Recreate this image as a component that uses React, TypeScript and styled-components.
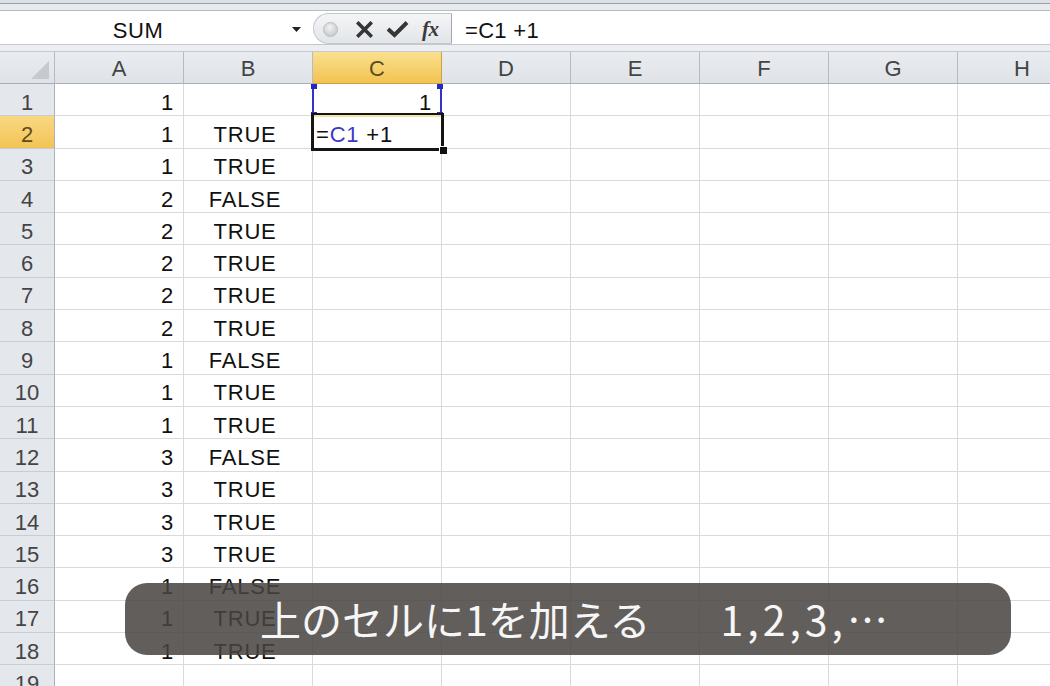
import React from "react";
import styled, { createGlobalStyle, css } from "styled-components";

const Global = createGlobalStyle`
  html, body { margin: 0; padding: 0; background: #ffffff; overflow: hidden; }
  * { box-sizing: border-box; }
`;

const Page = styled.div`
  position: relative;
  width: 1050px;
  height: 686px;
  overflow: hidden;
  display: flex;
  flex-direction: column;
  font-family: "Liberation Sans", Arial, sans-serif;
  background: #fff;
`;

const TopStrip = styled.div`
  height: 12px;
  flex: none;
  background: linear-gradient(
    to bottom,
    #dde1e6 0,
    #dde1e6 3px,
    #9aa0a7 3px,
    #9aa0a7 4px,
    #e8ebee 4px,
    #e8ebee 10px,
    #b7bcc2 10px,
    #b7bcc2 11px,
    #ffffff 11px
  );
`;

const FormulaBar = styled.div`
  height: 33px;
  flex: none;
  display: flex;
  align-items: stretch;
  background: #ffffff;
  border-bottom: 1px solid #c3c8ce;
`;

const NameBox = styled.div`
  width: 276px;
  display: flex;
  align-items: center;
  justify-content: center;
  padding-top: 5px;
  font-size: 22px;
  letter-spacing: 0.6px;
  color: #111;
`;

const NameArrow = styled.div`
  width: 37px;
  display: flex;
  align-items: center;
  justify-content: center;
  padding-left: 4px;
  padding-top: 3px;
`;

const ButtonGroup = styled.div`
  width: 139px;
  display: flex;
  align-items: center;
  padding-left: 9px;
  padding-top: 1px;
  margin: 1px 0 0;
  border: 1px solid #c4c8cd;
  border-right: 1px solid #a3a8ae;
  border-radius: 16px 0 0 16px;
  background: linear-gradient(to bottom, #f4f5f7, #e2e5e8);
`;

const ExpandDot = styled.div`
  width: 15px;
  height: 15px;
  border-radius: 50%;
  background: radial-gradient(circle at 45% 35%, #f2f3f4 0, #d3d6d9 55%, #babec2 100%);
  border: 1px solid #b9bdc2;
`;

const IconSlot = styled.div<{ $ml: number }>`
  margin-left: ${(p) => p.$ml}px;
  display: flex;
  align-items: center;
`;

const Fx = styled.span`
  margin-left: 13px;
  font-family: "Liberation Serif", "Times New Roman", serif;
  font-style: italic;
  font-weight: bold;
  font-size: 21px;
  color: #3a3a3a;
  letter-spacing: -0.5px;
`;

const FormulaInput = styled.div`
  flex: 1;
  display: flex;
  align-items: center;
  padding-left: 13px;
  padding-top: 5px;
  font-size: 22px;
  color: #111;
  letter-spacing: 0.3px;
`;

const Band = styled.div`
  height: 7px;
  flex: none;
  background: #eceef1;
  border-bottom: 1px solid #c5cad0;
`;

const Sheet = styled.div`
  display: grid;
  grid-template-columns: 55px repeat(8, 129px);
  grid-template-rows: 32px repeat(19, 32.3px);
  width: 1087px;
  flex: none;
`;

const headerBase = css`
  display: flex;
  align-items: center;
  justify-content: center;
  padding-top: 3px;
  font-size: 22px;
  color: #444;
  background: linear-gradient(to bottom, #e9ecf0, #dfe3e8);
  border-right: 1px solid #b6bbc1;
  border-bottom: 1px solid #a9aeb4;
`;

const Corner = styled.div`
  ${headerBase};
  position: relative;
  justify-content: flex-end;
  align-items: flex-end;
  padding: 0 5px 4px 0;
`;

const ColHeader = styled.div<{ $sel?: boolean }>`
  ${headerBase};
  ${(p) =>
    p.$sel &&
    css`
      background: linear-gradient(to bottom, #fae08f, #f2c352);
      color: #5e4c1c;
      border-bottom-color: #c9a246;
      border-right-color: #c9a246;
    `}
`;

const RowHeader = styled.div<{ $sel?: boolean }>`
  display: flex;
  align-items: center;
  justify-content: center;
  padding-top: 6px;
  font-size: 22px;
  color: #444;
  background: #e4e7ec;
  border-right: 1px solid #adb2b8;
  border-bottom: 1px solid #c9cdd2;
  ${(p) =>
    p.$sel &&
    css`
      background: linear-gradient(to bottom, #f9d882, #f2c455);
      color: #5e4c1c;
    `}
`;

const Cell = styled.div<{ $align: "left" | "right" | "center" }>`
  position: relative;
  display: flex;
  align-items: center;
  justify-content: ${(p) =>
    p.$align === "right" ? "flex-end" : p.$align === "center" ? "center" : "flex-start"};
  padding: 6px 9px 0 3px;
  font-size: 22px;
  letter-spacing: 0.8px;
  color: #111;
  border-right: 1px solid #d9dadc;
  border-bottom: 1px solid #d9dadc;
  white-space: nowrap;
`;

const RefHighlight = styled.div`
  position: absolute;
  top: 0;
  bottom: -1px;
  left: -1px;
  right: -1px;
  border-left: 2px solid #3434c4;
  border-right: 2px solid #3434c4;
  pointer-events: none;
`;

const Handle = styled.span<{ $v: "top" | "bottom"; $h: "left" | "right" }>`
  position: absolute;
  width: 6px;
  height: 5px;
  background: #2626c8;
  ${(p) => (p.$v === "top" ? "top: 0;" : "bottom: -1px;")}
  ${(p) => (p.$h === "left" ? "left: -3px;" : "right: -3px;")}
`;

const EditBorder = styled.div`
  position: absolute;
  top: -3px;
  left: -2px;
  right: -3px;
  bottom: -3px;
  border: 3px solid #151515;
  border-top-width: 2px;
  box-shadow: inset 0 2px 0 #f3e4a3;
  pointer-events: none;
`;

const FillHandle = styled.span`
  position: absolute;
  right: -6px;
  bottom: -6px;
  width: 8px;
  height: 8px;
  background: #111;
  border-left: 1px solid #fff;
  border-top: 1px solid #fff;
`;

const RefText = styled.span`
  color: #3a3ac4;
`;

const Caption = styled.div`
  position: absolute;
  left: 125px;
  top: 583px;
  width: 886px;
  height: 72px;
  border-radius: 22px;
  background: rgba(72, 68, 64, 0.86);
  display: flex;
  align-items: center;
  padding-left: 135px;
  padding-bottom: 2px;
  color: #f6f6f6;
  font-family: "Noto Sans CJK JP", "Noto Sans", sans-serif;
  font-size: 41px;
  font-weight: 400;
  white-space: nowrap;
`;

const CaptionSeq = styled.span`
  margin-left: 70px;
  letter-spacing: 4px;
`;

const cols = ["A", "B", "C", "D", "E", "F", "G", "H"];

const data: [string, string][] = [
  ["1", ""],
  ["1", "TRUE"],
  ["1", "TRUE"],
  ["2", "FALSE"],
  ["2", "TRUE"],
  ["2", "TRUE"],
  ["2", "TRUE"],
  ["2", "TRUE"],
  ["1", "FALSE"],
  ["1", "TRUE"],
  ["1", "TRUE"],
  ["3", "FALSE"],
  ["3", "TRUE"],
  ["3", "TRUE"],
  ["3", "TRUE"],
  ["1", "FALSE"],
  ["1", "TRUE"],
  ["1", "TRUE"],
  ["", ""],
];

const CornerTriangle = () => (
  <svg width="18" height="18" viewBox="0 0 18 18">
    <polygon points="18,0 18,18 0,18" fill="#c6cacf" />
  </svg>
);

const CrossIcon = () => (
  <svg width="17" height="17" viewBox="0 0 17 17">
    <path d="M2.5 2.5 L14.5 14.5 M14.5 2.5 L2.5 14.5" stroke="#363636" strokeWidth="3.6" strokeLinecap="square" fill="none" />
  </svg>
);

const CheckIcon = () => (
  <svg width="23" height="18" viewBox="0 0 23 18">
    <path d="M2 9 L8.5 15 L21 2.5" stroke="#363636" strokeWidth="4" strokeLinejoin="miter" fill="none" />
  </svg>
);

const DropArrow = () => (
  <svg width="9" height="5" viewBox="0 0 9 5">
    <polygon points="0,0 9,0 4.5,5" fill="#222" />
  </svg>
);

export default function App() {
  return (
    <Page>
      <Global />
      <TopStrip />
      <FormulaBar>
        <NameBox>SUM</NameBox>
        <NameArrow>
          <DropArrow />
        </NameArrow>
        <ButtonGroup>
          <ExpandDot />
          <IconSlot $ml={18}>
            <CrossIcon />
          </IconSlot>
          <IconSlot $ml={13}>
            <CheckIcon />
          </IconSlot>
          <Fx>fx</Fx>
        </ButtonGroup>
        <FormulaInput>=C1 +1</FormulaInput>
      </FormulaBar>
      <Band />
      <Sheet>
        <Corner>
          <CornerTriangle />
        </Corner>
        {cols.map((c) => (
          <ColHeader key={c} $sel={c === "C"}>
            {c}
          </ColHeader>
        ))}
        {data.map(([a, b], i) => {
          const r = i + 1;
          return (
            <React.Fragment key={r}>
              <RowHeader $sel={r === 2}>{r}</RowHeader>
              <Cell $align="right">{a}</Cell>
              <Cell $align="center">{b}</Cell>
              {r === 1 ? (
                <Cell $align="right">
                  1
                  <RefHighlight>
                    <Handle $v="top" $h="left" />
                    <Handle $v="top" $h="right" />
                    <Handle $v="bottom" $h="left" />
                    <Handle $v="bottom" $h="right" />
                  </RefHighlight>
                </Cell>
              ) : r === 2 ? (
                <Cell $align="left" style={{ zIndex: 2 }}>
                  =<RefText>C1</RefText>&nbsp;+1
                  <EditBorder />
                  <FillHandle />
                </Cell>
              ) : (
                <Cell $align="left" />
              )}
              {cols.slice(3).map((c) => (
                <Cell key={c} $align="left" />
              ))}
            </React.Fragment>
          );
        })}
      </Sheet>
      <Caption>
        <span>上のセルに1を加える</span>
        <CaptionSeq>1,2,3,…</CaptionSeq>
      </Caption>
    </Page>
  );
}
